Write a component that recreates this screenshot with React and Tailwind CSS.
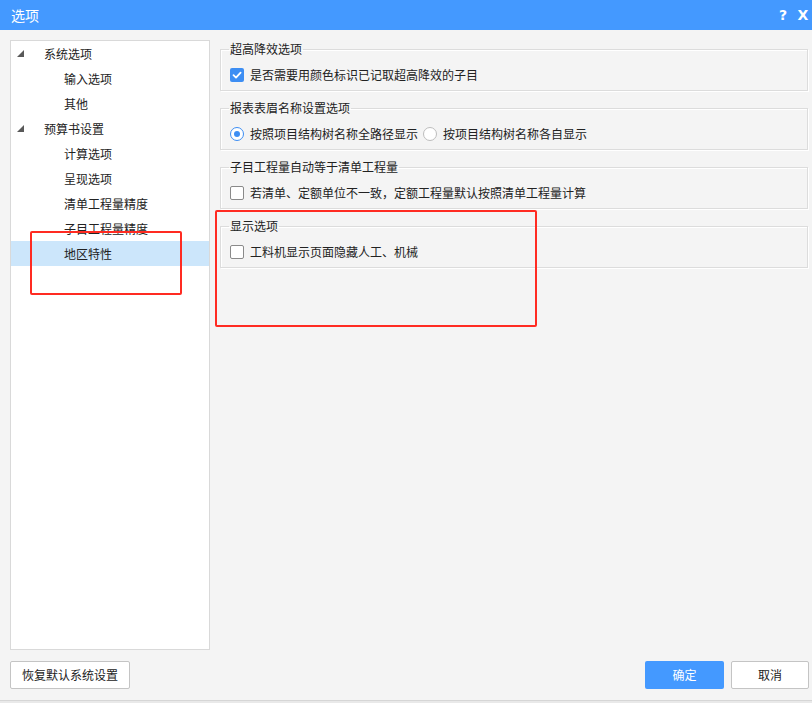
import React from "react";

const FONT = { fontFamily: '"Noto Sans CJK SC", "Noto Sans", sans-serif' };

function Tri() {
  return (
    <svg width="7" height="7" viewBox="0 0 7 7" className="block">
      <polygon points="7,0 7,7 0,7" fill="#595959" />
    </svg>
  );
}

function TreeRow({ level, label, expand, selected }) {
  return (
    <div
      className={
        "h-[25px] flex items-center text-[12px] text-[#222] " +
        (selected ? "bg-[#cce6fb]" : "")
      }
    >
      <div className="w-[33px] pl-[6px] shrink-0">{expand ? <Tri /> : null}</div>
      <div className={level === 2 ? "pl-[20px]" : ""}>{label}</div>
    </div>
  );
}

function CheckBox({ checked }) {
  if (checked) {
    return (
      <div className="w-[14px] h-[14px] rounded-[2px] bg-[#3d8ef3] flex items-center justify-center shrink-0">
        <svg width="10" height="10" viewBox="0 0 10 10">
          <path d="M1.5 5.2 L4 7.6 L8.6 2.6" stroke="#fff" strokeWidth="1.8" fill="none" strokeLinecap="round" strokeLinejoin="round" />
        </svg>
      </div>
    );
  }
  return <div className="w-[14px] h-[14px] rounded-[2px] bg-white border border-[#8a8a8a] shrink-0" />;
}

function Radio({ checked }) {
  return (
    <div
      className={
        "w-[14px] h-[14px] rounded-full bg-white border flex items-center justify-center shrink-0 " +
        (checked ? "border-[#3d8ef3]" : "border-[#bdbdbd]")
      }
    >
      {checked ? <div className="w-[6px] h-[6px] rounded-full bg-[#3d8ef3]" /> : null}
    </div>
  );
}

function Group({ title, children }) {
  return (
    <fieldset className="border border-[#dcdcdc] shadow-[inset_1px_1px_0_#ffffff,1px_1px_0_#ffffff] pl-[9px] pr-[10px] pb-[7px]">
      <legend className="text-[12px] leading-[16px] text-[#222] px-[1px] -ml-[1px]">{title}</legend>
      <div className="mt-[10px] h-[16px] flex items-center text-[12px] text-[#222]">{children}</div>
    </fieldset>
  );
}

export default function App() {
  return (
    <div className="relative w-[812px] h-[703px] bg-[#f4f4f4] overflow-hidden" style={FONT}>
      {/* title bar */}
      <div className="h-[30px] bg-[#4499ff] flex items-center text-white">
        <div className="pl-[11px] text-[14px] flex-1">选项</div>
        <div className="text-[14px] font-bold w-[26px] text-center" style={{ fontFamily: '"DejaVu Sans", sans-serif' }}>?</div>
        <div className="text-[14px] font-bold w-[16px] pr-[2px] text-center" style={{ fontFamily: '"DejaVu Sans", sans-serif' }}>X</div>
      </div>

      <div className="flex pt-[10px] pl-[10px] pr-[4px]">
        {/* tree */}
        <div className="w-[200px] h-[610px] bg-white border border-[#d9d9d9]">
          <TreeRow level={1} label="系统选项" expand />
          <TreeRow level={2} label="输入选项" />
          <TreeRow level={2} label="其他" />
          <TreeRow level={1} label="预算书设置" expand />
          <TreeRow level={2} label="计算选项" />
          <TreeRow level={2} label="呈现选项" />
          <TreeRow level={2} label="清单工程量精度" />
          <TreeRow level={2} label="子目工程量精度" />
          <TreeRow level={2} label="地区特性" selected />
        </div>

        {/* right */}
        <div className="ml-[10px] flex-1 pt-[1px] flex flex-col gap-[9px]">
          <Group title="超高降效选项">
            <CheckBox checked />
            <span className="ml-[6px]">是否需要用颜色标识已记取超高降效的子目</span>
          </Group>
          <Group title="报表表眉名称设置选项">
            <Radio checked />
            <span className="ml-[6px]">按照项目结构树名称全路径显示</span>
            <div className="ml-[5px]"><Radio /></div>
            <span className="ml-[6px]">按项目结构树名称各自显示</span>
          </Group>
          <Group title="子目工程量自动等于清单工程量">
            <CheckBox />
            <span className="ml-[6px]">若清单、定额单位不一致，定额工程量默认按照清单工程量计算</span>
          </Group>
          <Group title="显示选项">
            <CheckBox />
            <span className="ml-[6px]">工料机显示页面隐藏人工、机械</span>
          </Group>
        </div>
      </div>

      {/* bottom buttons */}
      <div className="mt-[11px] h-[28px] flex items-center pl-[10px] pr-[3px]">
        <button className="h-[28px] w-[120px] bg-white border border-[#c4c4c4] rounded-[2px] text-[12px] text-[#222]">恢复默认系统设置</button>
        <div className="flex-1" />
        <button className="h-[28px] w-[79px] bg-[#4499ff] rounded-[2px] text-[12px] text-white">确定</button>
        <button className="ml-[7px] h-[28px] w-[78px] bg-white border border-[#c4c4c4] rounded-[2px] text-[12px] text-[#222]">取消</button>
      </div>

      {/* window bottom edge */}
      <div className="mt-[11px] h-[3px] border-t border-[#d6d6d6] bg-[#e9e9e9]" />

      {/* red annotation boxes */}
      <div className="absolute left-[30px] top-[231px] w-[152px] h-[64px] border-2 border-[#ff2b22] rounded-[2px]" />
      <div className="absolute left-[215px] top-[210px] w-[322px] h-[117px] border-2 border-[#ff2b22] rounded-[2px]" />
    </div>
  );
}
